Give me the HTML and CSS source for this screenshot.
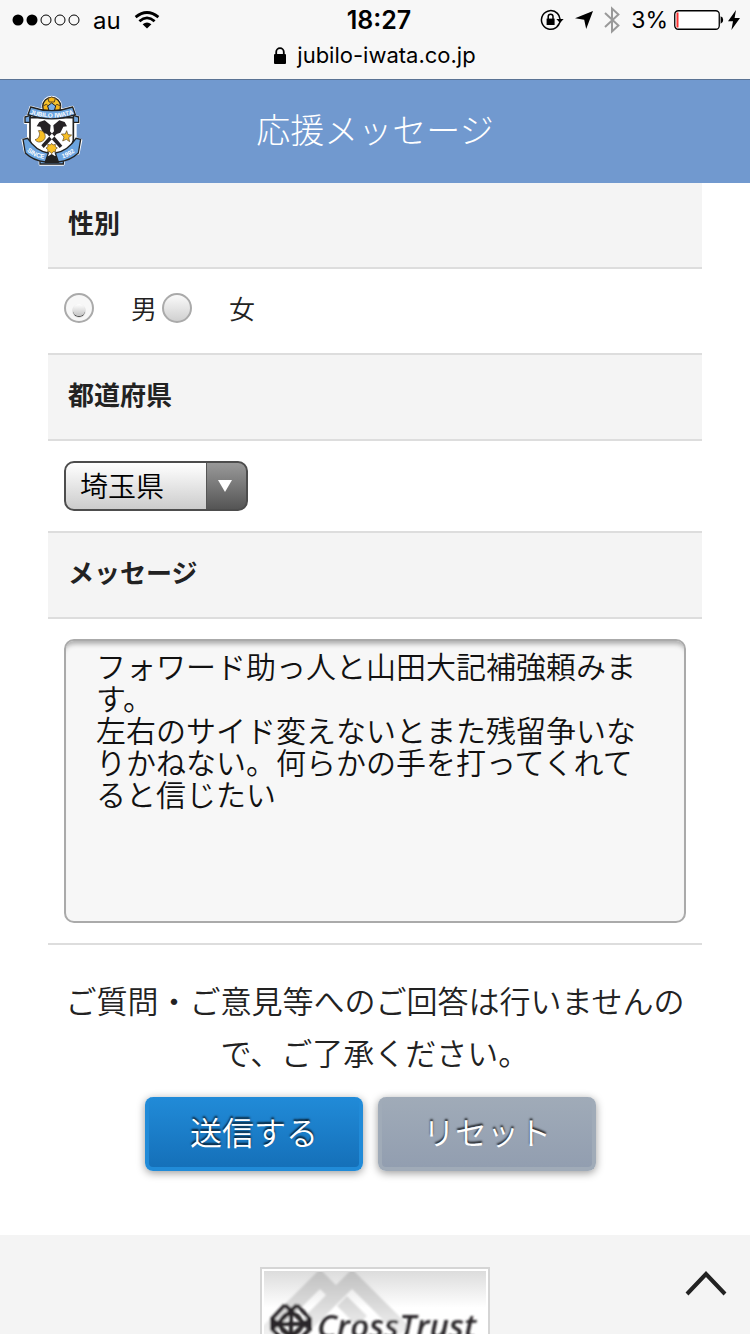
FILE: index.html
```html
<!DOCTYPE html>
<html lang="ja">
<head>
    <meta charset="UTF-8">
    <meta name="viewport" content="width=device-width, initial-scale=1.0">
    <title>応援メッセージ</title>
    <link rel="stylesheet" href="styles.css">
</head>
<body>
    <div class="browser-bar">
        <div class="status">
            <div class="status-left">
                <svg width="68" height="12" viewBox="0 0 68 12">
                    <circle cx="6" cy="6" r="5.5"/>
                    <circle cx="20" cy="6" r="5.5"/>
                    <g fill="none" stroke="#000">
                        <circle cx="34" cy="6" r="5"/>
                        <circle cx="48" cy="6" r="5"/>
                        <circle cx="62" cy="6" r="5"/>
                    </g>
                </svg>
                <span class="carrier">au</span>
                <svg width="26" height="18" viewBox="0 0 26 18">
                    <path d="M13 17.5L8.6 13.2Q13 9.6 17.4 13.2Z"/>
                    <path d="M5.4 10.2Q13 3.6 20.6 10.2M1.6 6.2Q13 -3.2 24.4 6.2" fill="none" stroke="#000" stroke-width="2.8"/>
                </svg>
            </div>
            <span class="clock">18:27</span>
            <div class="status-right">
                <svg width="24" height="22" viewBox="0 0 24 22">
                    <path d="M20 12A9.3 9.3 0 1 1 17.4 4.4Q19.6 6.6 20 10M17 17.6A9.3 9.3 0 0 0 19 14.6" fill="none" stroke="#000" stroke-width="1.5"/>
                    <path d="M16.4 10h7.2L20 14Z"/>
                    <path d="M6.6 9.6h8v6.4h-8Z"/>
                    <path d="M8.2 10V7.6a2.4 2.4 0 0 1 4.8 0V10" fill="none" stroke="#000" stroke-width="1.5"/>
                </svg>
                <svg width="18" height="18" viewBox="0 0 18 18">
                    <path d="M18 0L11.2 18L9.2 8.8L0 7.2Z"/>
                </svg>
                <svg width="16" height="28" viewBox="0 0 16 28">
                    <path d="M1 7L14.4 19.4L8 25.4V2.6L14.4 8.6L1 21" fill="none" stroke="#999" stroke-width="2"/>
                </svg>
                <span class="percent">3%</span>
                <svg width="50" height="20" viewBox="0 0 50 20">
                    <rect x=".75" y=".75" width="44.5" height="18.5" rx="3.5" fill="#fff" stroke="#000" stroke-width="1.3"/>
                    <rect x="2.5" y="2.5" width="2" height="15" fill="#fc3030"/>
                    <path d="M46.6 6.2Q49.2 7 49.2 10T46.6 13.8Z"/>
                </svg>
                <svg width="12" height="20" viewBox="0 0 12 20">
                    <path d="M8 0L0 11.2H5L3.4 20L12 8H6.6Z"/>
                </svg>
            </div>
        </div>
        <div class="address">
            <svg width="12" height="17" viewBox="0 0 12 17">
                <rect y="7" width="12" height="10" rx="1"/>
                <path d="M2.2 8V5a3.8 3.8 0 0 1 7.6 0V8" fill="none" stroke="#000" stroke-width="1.8"/>
            </svg>
            <span>jubilo-iwata.co.jp</span>
        </div>
    </div>

    <header class="header">
        <a href="/" class="logo" aria-label="JUBILO IWATA">
            <svg width="62" height="72" viewBox="33 30 186 216">
                <defs>
                    <path id="arc-top" d="M56 86Q125 109 194 86"/>
                    <path id="arc-left" d="M46 192Q68 218 108 223"/>
                    <path id="arc-right" d="M145 223Q182 217 204 191"/>
                </defs>
                <!-- white outline -->
                <g fill="#fff" stroke="#fff" stroke-width="8" stroke-linejoin="round">
                    <circle cx="125" cy="63" r="27"/>
                    <path d="M62 66Q125 88 188 66L196 94L206 97V113L196 114V160L213 166L205 205L160 218V238H90V218L46 202L38 165L55 160V114L45 113V97L54 92Z"/>
                </g>
                <circle cx="125" cy="64" r="27" fill="#f5c22d" stroke="#222" stroke-width="4"/>
                <path d="M114 40L125 36L136 40L133 51H117ZM99 63L109 58L118 65L114 78H101ZM151 63L141 58L132 65L136 78H149Z" fill="#f7b719" stroke="#5a4526" stroke-width="3"/>
                <path d="M113 63L125 54L137 63L133 77H117Z" fill="#79aee8" stroke="#222" stroke-width="3"/>
                <path d="M45 96L61 91V112H45ZM206 96L190 91V112H206Z" fill="#70a5df" stroke="#222" stroke-width="4"/>
                <path d="M60 98H190V166Q181 203 125 219Q69 203 60 166Z" fill="#fff" stroke="#222" stroke-width="5"/>
                <!-- crossed birds -->
                <path d="M88 111L104 106L122 121L120 139L157 182L149 189L111 147L99 143L91 125L80 124ZM164 111L148 106L130 121L132 139L94 181L101 189L140 147L151 143L160 125L171 124Z" fill="#262225"/>
                <path d="M85 137A17 17 0 1 1 75 164A17 17 0 0 0 85 137Z" fill="#f9bf24" stroke="#5a4526" stroke-width="2"/>
                <path d="M170 137L174 149L185 150L176 158L179 170L169 163L158 168L162 156L154 147L166 147Z" fill="#f9bf24" stroke="#5a4526" stroke-width="2"/>
                <path d="M125 175L129 180L136 178L136 185L142 189L136 194L137 200L130 200L125 206L120 200L113 201L114 194L108 189L114 185L113 178L121 180Z" fill="#f9bf24" stroke="#5a4526" stroke-width="2"/>
                <path d="M62 66Q125 88 188 66L196 89Q125 114 54 89Z" fill="#6ba4df" stroke="#222" stroke-width="4"/>
                <path d="M90 217H160V237H90Z" fill="#70a5df" stroke="#222" stroke-width="4"/>
                <path d="M39 163L53 160Q77 197 115 204L106 231Q70 227 46 204ZM212 163L198 160Q174 197 136 204L145 231Q181 227 205 204Z" fill="#6ba4df" stroke="#222" stroke-width="4"/>
                <path d="M112 215L125 207L138 215L147 234H104Z" fill="#222"/>
                <g class="logo-text">
                    <text><textPath href="#arc-top" startOffset="50%">JUBILO IWATA</textPath></text>
                    <text><textPath href="#arc-left" startOffset="50%">SINCE</textPath></text>
                    <text><textPath href="#arc-right" startOffset="50%">1992</textPath></text>
                </g>
            </svg>
        </a>
        <h1>応援メッセージ</h1>
    </header>

    <main class="page">
        <form class="message-form">
            <h2 class="form-title" id="gender-title">性別</h2>
            <div class="form-row gender" role="radiogroup" aria-labelledby="gender-title">
                <label><input type="radio" name="gender" value="m" checked>男</label>
                <label><input type="radio" name="gender" value="f">女</label>
            </div>

            <h2 class="form-title"><label for="pref">都道府県</label></h2>
            <div class="form-row">
                <div class="select-box">
                    <select id="pref" name="pref">
                        <option>埼玉県</option>
                    </select>
                    <svg class="select-arrow" width="14" height="12" viewBox="0 0 14 12">
                        <path d="M0 0H14L7 12Z" fill="#fff"/>
                    </svg>
                </div>
            </div>

            <h2 class="form-title"><label for="message">メッセージ</label></h2>
            <div class="form-row">
                <textarea id="message" name="message" spellcheck="false">フォワード助っ人と山田大記補強頼みます。
左右のサイド変えないとまた残留争いなりかねない。何らかの手を打ってくれてると信じたい</textarea>
            </div>

            <p class="note">ご質問・ご意見等へのご回答は行いませんので、ご了承ください。</p>
            <div class="buttons">
                <button type="submit" class="btn btn-send">送信する</button>
                <button type="reset" class="btn btn-reset">リセット</button>
            </div>
        </form>

        <footer class="footer">
            <a href="#" class="trust" aria-label="CrossTrust">
                <svg width="222" height="92" viewBox="0 0 222 92">
                    <defs>
                        <linearGradient id="trust-bg" x2="0" y2="1">
                            <stop offset="0" stop-color="#dcdcdc"/>
                            <stop offset=".4" stop-color="#fff"/>
                        </linearGradient>
                        <linearGradient id="trust-mark" gradientUnits="userSpaceOnUse" x1="0" y1="0" x2="0" y2="62">
                            <stop offset="0" stop-color="#c0c0c0"/>
                            <stop offset="1" stop-color="#f0f0f0"/>
                        </linearGradient>
                        <filter id="soft"><feGaussianBlur stdDeviation=".9"/></filter>
                    </defs>
                    <rect width="222" height="92" fill="url(#trust-bg)"/>
                    <g filter="url(#soft)">
                        <path d="M-4 68L56 8L76 28M44 52L88 8L140 60M78 30L98 50" fill="none" stroke="url(#trust-mark)" stroke-width="14"/>
                        <g fill="none" stroke="#2a2829" stroke-width="4">
                            <path d="M21 34L8 48V58L21 71M33 34L46 48V58L33 71M21 34L46 58M33 34L8 58M8 48L33 71M46 48L21 71M10 53H44M27 37V69"/>
                            <circle cx="27" cy="53" r="11" stroke-width="3"/>
                        </g>
                        <text class="trust-text" x="53" y="67">CrossTrust</text>
                    </g>
                </svg>
            </a>
            <a href="#" class="to-top" aria-label="ページの先頭へ">
                <svg width="42" height="26" viewBox="0 0 42 26">
                    <path d="M2 24L21 4L40 24" fill="none" stroke="#222" stroke-width="4"/>
                </svg>
            </a>
        </footer>
    </main>
</body>
</html>
```

FILE: styles.css
```css
* {
    box-sizing: border-box;
}
body {
    margin: 0;
    height: 100vh;
    display: flex;
    flex-direction: column;
    overflow: hidden;
    background: #fff;
    color: #222;
    font-family: "Noto Sans CJK JP", sans-serif;
    font-weight: 350;
}
svg {
    display: block;
    flex: none;
}

/* status bar and address */
.browser-bar {
    height: 80px;
    flex: none;
    background: #f7f7f7;
    border-bottom: 1px solid #5b7394;
    color: #000;
    font-family: Inter, sans-serif;
    font-size: 24px;
    font-weight: 400;
}
.status {
    display: grid;
    grid-template-columns: 1fr auto 1fr;
    align-items: center;
    height: 40px;
    padding: 0 4px 0 12px;
}
.status-left,
.status-right {
    display: flex;
    align-items: center;
}
.status-left {
    gap: 13px;
}
.status-right {
    justify-content: flex-end;
    gap: 11px;
    padding-right: 6px;
}
.clock {
    font-size: 25px;
    font-weight: 600;
}
.percent {
    font-size: 23px;
}
.percent + svg {
    margin-left: -5px;
}
.percent + svg + svg {
    margin-left: -7px;
}
.address {
    display: flex;
    align-items: center;
    justify-content: center;
    gap: 11px;
    height: 30px;
    font-size: 22px;
}

/* header */
.header {
    display: grid;
    grid-template-columns: 62px 1fr 62px;
    align-items: center;
    flex: none;
    height: 103px;
    padding: 0 21px 2px;
    background: #7199cf;
}
.header h1 {
    margin: 0;
    padding-bottom: 4px;
    color: #fff;
    font-size: 34px;
    font-weight: 300;
    text-align: center;
}
.logo-text {
    fill: #fff;
    font-family: "Liberation Sans", sans-serif;
    font-size: 19px;
    font-weight: bold;
    text-anchor: middle;
}

/* form */
.page {
    flex: 1;
    min-height: 0;
    overflow: hidden;
}
.message-form {
    margin: 0 48px;
}
.form-title {
    margin: 0;
    padding: 0 20px 6px;
    background: #f4f4f4;
    border-bottom: 2px solid #ddd;
    font-size: 26px;
    font-weight: bold;
    line-height: 78px;
}
.form-row {
    padding: 20px 16px;
    border-bottom: 2px solid #ddd;
}
.gender {
    display: flex;
    gap: 5px;
    padding-bottom: 26px;
    font-size: 26px;
    line-height: 38px;
}
.gender label {
    display: flex;
    align-items: center;
}
.gender input {
    appearance: none;
    display: grid;
    place-items: center;
    width: 30px;
    height: 30px;
    margin: 0 37px 0 0;
    border: 2px solid #aaa;
    border-radius: 50%;
    background: linear-gradient(#fafafa, #d0d0d0);
}
.gender input:checked {
    background: #f7f7f7;
}
.gender input:checked::before {
    content: "";
    width: 12px;
    height: 12px;
    margin-top: 4px;
    border-radius: 50%;
    background: linear-gradient(#fff, #c4c4c4);
    box-shadow: 0 1px 1px #333;
}
.select-box {
    display: inline-grid;
    align-items: center;
    vertical-align: top;
}
.select-box select,
.select-arrow {
    grid-area: 1 / 1;
}
.select-box select {
    appearance: none;
    width: 184px;
    height: 50px;
    padding: 0 56px 2px 14px;
    border: 2px solid #4d4d4d;
    border-radius: 10px;
    background:
        linear-gradient(#555, #555) right 39px top / 1px 100% no-repeat,
        linear-gradient(#999, #555) right / 40px 100% no-repeat,
        linear-gradient(#fff, #ccc);
    color: #000;
    font: inherit;
    font-size: 28px;
}
.select-arrow {
    justify-self: end;
    margin-right: 16px;
    pointer-events: none;
}
textarea {
    display: block;
    width: 100%;
    height: 284px;
    padding: 8px 30px;
    border: 2px solid #aaa;
    border-radius: 10px;
    background: #f7f7f7;
    box-shadow: inset 0 7px 5px -4px rgba(0,0,0,0.3);
    color: #111;
    font: inherit;
    font-size: 30px;
    line-height: 32px;
    resize: none;
    overflow: hidden;
}
.note {
    margin: 0;
    padding: 29px 16px 19px;
    font-size: 31px;
    line-height: 52px;
    text-align: center;
}
.buttons {
    display: flex;
    justify-content: center;
    gap: 15px;
    padding: 0 9px 64px 0;
}
.btn {
    width: 218px;
    height: 74px;
    padding: 0 0 2px;
    border: 4px solid;
    border-top-width: 0;
    border-radius: 8px;
    box-shadow: 0 2px 8px rgba(0,0,0,0.4);
    color: #fff;
    font: inherit;
    font-size: 32px;
    text-shadow: 0 -2px 2px rgba(0,0,0,0.8);
    cursor: pointer;
}
.btn-send {
    background: linear-gradient(#218bd8, #1570b9);
    border-color: #218bd8;
}
.btn-reset {
    background: linear-gradient(#a0abb8, #929eb0);
    border-color: #a0abb8;
}

/* footer */
.footer {
    display: grid;
    grid-template-columns: 1fr auto 1fr;
    align-items: start;
    padding: 32px 23px;
    background: #f4f4f4;
}
.trust {
    grid-column: 2;
    padding: 2px;
    border: 2px solid #d5d5d5;
    background: #fff;
}
.trust-text {
    fill: #2a2829;
    font-family: "Open Sans", sans-serif;
    font-size: 33px;
    font-style: italic;
    font-weight: 600;
}
.to-top {
    justify-self: end;
    padding-top: 3px;
}
```
